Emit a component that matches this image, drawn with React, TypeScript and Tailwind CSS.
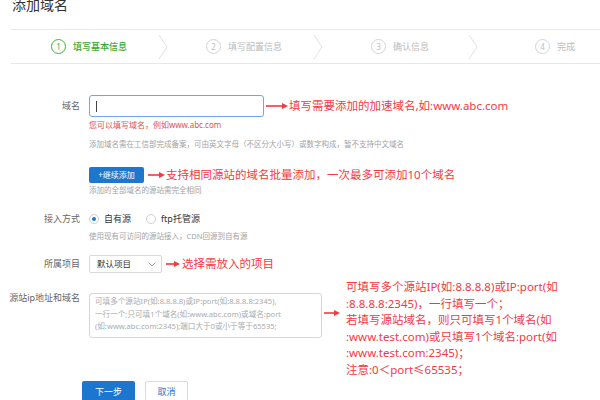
import React from "react";

const RED = "text-[#f23a3f]";

function Arrow({ w }: { w: number }) {
  return (
    <svg width={w} height="8" viewBox={`0 0 ${w} 8`} className="shrink-0">
      <line x1="0" y1="4" x2={w - 5} y2="4" stroke="#f23a3f" strokeWidth="1.6" />
      <polygon points={`${w - 6},1 ${w},4 ${w - 6},7`} fill="#f23a3f" />
    </svg>
  );
}

function Chevron() {
  return (
    <svg width="10" height="26" viewBox="0 0 10 26" className="shrink-0">
      <polyline points="1,1 9,13 1,25" fill="none" stroke="#e2e2e2" strokeWidth="1" />
    </svg>
  );
}

function Step({ n, label, active }: { n: number; label: string; active?: boolean }) {
  return (
    <div className="flex items-center gap-[7px]">
      <div
        className={`w-[15px] h-[15px] rounded-full border-[1.5px] flex items-center justify-center text-[8px] leading-none ${
          active ? "border-[#3db33d] text-[#3db33d]" : "border-[#d4d4d4] text-[#bdbdbd]"
        }`}
      >
        {n}
      </div>
      <span className={`text-[9px] leading-none ${active ? "text-[#37a837] font-medium" : "text-[#bcbcbc]"}`}>
        {label}
      </span>
    </div>
  );
}

function Label({ children }: { children: React.ReactNode }) {
  return <div className="w-[80px] shrink-0 text-right text-[9px] leading-[12px] text-[#666]">{children}</div>;
}

function Help({ children, mt }: { children: React.ReactNode; mt: string }) {
  return <div className={`ml-[89px] ${mt} text-[7.5px] leading-[12px] text-[#a3a3a3] whitespace-nowrap`}>{children}</div>;
}

export default function App() {
  return (
    <div className="w-[600px] h-[400px] overflow-hidden bg-white font-['Noto_Sans','Noto_Sans_CJK_SC',sans-serif]">
      <div className="pl-[12px] mt-[-2px] text-[14px] leading-[14px] text-[#333]">添加域名</div>

      <div className="ml-[11px] mt-[17px] h-[35px] border-y border-[#e8e8e8] flex items-center">
        <div className="w-[147px] pl-[40px]">
          <Step n={1} label="填写基本信息" active />
        </div>
        <Chevron />
        <div className="w-[145px] pl-[38px]">
          <Step n={2} label="填写配置信息" />
        </div>
        <Chevron />
        <div className="w-[145px] pl-[48px]">
          <Step n={3} label="确认信息" />
        </div>
        <Chevron />
        <div className="pl-[57px]">
          <Step n={4} label="完成" />
        </div>
      </div>

      {/* 域名 */}
      <div className="mt-[31px] flex items-center">
        <Label>域名</Label>
        <div className="ml-[9px] w-[175px] h-[22px] border border-[#6ea8e8] rounded-[3px] flex items-center pl-[6px]">
          <div className="w-px h-[11px] bg-[#444]" />
        </div>
        <div className="ml-[2px]"><Arrow w={22} /></div>
        <div className={`ml-[1px] text-[11.5px] leading-[16px] ${RED} whitespace-nowrap`}>填写需要添加的加速域名,如:www.abc.com</div>
      </div>
      <div className="ml-[89px] mt-[2px] text-[8px] leading-[12px] text-[#e4504c]">您可以填写域名，例如www.abc.com</div>
      <Help mt="mt-[7px]">添加域名需在工信部完成备案，可由英文字母（不区分大小写）或数字构成，暂不支持中文域名</Help>

      <div className="mt-[17px] flex items-center">
        <div className="w-[89px] shrink-0" />
        <button className="w-[55px] h-[16px] bg-[#1d77cf] rounded-[2px] text-white text-[8px] leading-none flex items-center justify-center">
          +继续添加
        </button>
        <div className="ml-[4px]"><Arrow w={17} /></div>
        <div className={`ml-[1px] text-[11.5px] leading-[16px] ${RED} whitespace-nowrap`}>支持相同源站的域名批量添加，一次最多可添加10个域名</div>
      </div>
      <Help mt="mt-[1px]">添加的全部域名的源站需完全相同</Help>

      {/* 接入方式 */}
      <div className="mt-[16px] flex items-center h-[14px]">
        <Label>接入方式</Label>
        <div className="ml-[9px] w-[10px] h-[10px] rounded-full border border-[#cfcfcf] flex items-center justify-center">
          <div className="w-[4px] h-[4px] rounded-full bg-[#1f78d1]" />
        </div>
        <span className="ml-[5px] text-[9px] text-[#333]">自有源</span>
        <div className="ml-[15px] w-[10px] h-[10px] rounded-full border border-[#cfcfcf]" />
        <span className="ml-[5px] text-[9px] text-[#333]">ftp托管源</span>
      </div>
      <Help mt="mt-[4px]">使用现有可访问的源站接入，CDN回源到自有源</Help>

      {/* 所属项目 */}
      <div className="mt-[13px] flex items-center">
        <Label>所属项目</Label>
        <div className="ml-[9px] w-[73px] h-[18px] border border-[#d9d9d9] rounded-[2px] flex items-center justify-between pl-[7px] pr-[5px]">
          <span className="text-[8.5px] text-[#333]">默认项目</span>
          <svg width="8" height="5" viewBox="0 0 8 5">
            <polyline points="0.5,0.5 4,4 7.5,0.5" fill="none" stroke="#aaa" strokeWidth="1" />
          </svg>
        </div>
        <div className="ml-[4px]"><Arrow w={14} /></div>
        <div className={`ml-[2px] text-[11.5px] leading-[16px] ${RED} whitespace-nowrap`}>选择需放入的项目</div>
      </div>

      {/* 源站 */}
      <div className="mt-[20px] flex items-start h-[45px]">
        <div className="mt-[-1px]">
          <Label>源站ip地址和域名</Label>
        </div>
        <div className="ml-[9px] w-[233px] h-[45px] shrink-0 border border-[#d6d6d6] rounded-[3px] px-[5px] pt-[1px] text-[7.6px] leading-[12.5px] text-[#ababab] whitespace-nowrap">
          <div>可填多个源站IP(如:8.8.8.8)或IP:port(如:8.8.8.8:2345),</div>
          <div>一行一个;只可填1个域名(如:www.abc.com)或域名:port</div>
          <div>(如:www.abc.com:2345);端口大于0或小于等于65535;</div>
        </div>
        <div className="ml-[2px] mt-[16px]"><Arrow w={16} /></div>
        <div className={`ml-[6px] mt-[-14px] text-[11.5px] leading-[16.6px] ${RED} whitespace-nowrap`}>
          <div>可填写多个源站IP(如:8.8.8.8)或IP:port(如</div>
          <div>:8.8.8.8:2345)，一行填写一个；</div>
          <div>若填写源站域名，则只可填写1个域名(如</div>
          <div>:www.test.com)或只填写1个域名:port(如</div>
          <div>:www.test.com:2345)；</div>
          <div>注意:0＜port≤65535；</div>
        </div>
      </div>

      <div className="mt-[43px] flex items-center">
        <button className="ml-[82px] w-[53px] h-[20px] bg-[#1c76d0] rounded-[2px] text-white text-[9px] leading-none">下一步</button>
        <button className="ml-[10px] w-[43px] h-[20px] border border-[#dadada] rounded-[2px] bg-white text-[#2a78cf] text-[9px] leading-none">取消</button>
      </div>
    </div>
  );
}
